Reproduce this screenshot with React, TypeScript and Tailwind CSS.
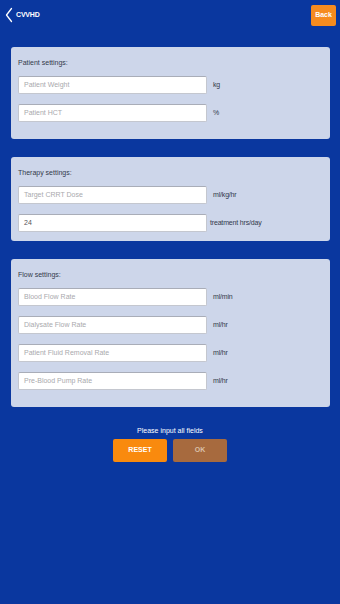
import React from "react";

type Field = { placeholder: string; unit: string; value?: string };

const SECTIONS: { title: string; fields: Field[]; pb: string }[] = [
  {
    title: "Patient settings:",
    pb: "pb-[17px]",
    fields: [
      { placeholder: "Patient Weight", unit: "kg" },
      { placeholder: "Patient HCT", unit: "%" },
    ],
  },
  {
    title: "Therapy settings:",
    pb: "pb-[9px]",
    fields: [
      { placeholder: "Target CRRT Dose", unit: "ml/kg/hr" },
      { placeholder: "", unit: "treatment hrs/day", value: "24" },
    ],
  },
  {
    title: "Flow settings:",
    pb: "pb-[17px]",
    fields: [
      { placeholder: "Blood Flow Rate", unit: "ml/min" },
      { placeholder: "Dialysate Flow Rate", unit: "ml/hr" },
      { placeholder: "Patient Fluid Removal Rate", unit: "ml/hr" },
      { placeholder: "Pre-Blood Pump Rate", unit: "ml/hr" },
    ],
  },
];

export default function App() {
  return (
    <div className="w-[340px] h-[604px] bg-[#0a379f] font-['Liberation_Sans',Arial,sans-serif] overflow-hidden">
      {/* header */}
      <div className="flex items-center justify-between h-[30px] pl-[5px] pr-[4px]">
        <div className="flex items-center gap-[3px] text-white">
          <svg width="8" height="16" viewBox="0 0 8 16" fill="none">
            <path d="M6.5 1.5 L1.5 8 L6.5 14.5" stroke="white" strokeWidth="1.3" strokeLinecap="round" strokeLinejoin="round" />
          </svg>
          <span className="text-[7px] font-bold tracking-tight">CVVHD</span>
        </div>
        <button className="w-[25px] h-[21px] bg-[#f68b1f] rounded-[2px] text-white text-[7px] font-bold">
          Back
        </button>
      </div>

      <div className="flex flex-col gap-[18px] px-[11px] pr-[10px] mt-[17px]">
        {SECTIONS.map(section => (
          <div key={section.title} className={`bg-[#cdd6ea] rounded-[3px] px-[7px] pt-[11px] ${section.pb}`}>
            <div className="text-[7px] text-[#333a4a] leading-[9px] h-[18px]">{section.title}</div>
            <div className="flex flex-col gap-[10px]">
              {section.fields.map(field => (
                <div key={field.unit + field.placeholder} className="flex items-center">
                  <div className="w-[189px] h-[18px] bg-white border border-[#c4c7cf] border-t-[#a9adb8] rounded-[2px] flex items-center px-[5px] text-[7px]">
                    {field.value ? (
                      <span className="text-[#555]">{field.value}</span>
                    ) : (
                      <span className="text-[#a9a9ad]">{field.placeholder}</span>
                    )}
                  </div>
                  <span className={`${field.value ? "ml-[3px]" : "ml-[6px]"} text-[7px] text-[#333a4a] tracking-tight`}>{field.unit}</span>
                </div>
              ))}
            </div>
          </div>
        ))}
      </div>

      <div className="flex flex-col items-center mt-[19px]">
        <div className="text-[7px] text-white leading-[9px]">Please input all fields</div>
        <div className="flex gap-[6px] mt-[4px]">
          <button className="w-[54px] h-[23px] bg-[#f98a0e] rounded-[2px] text-white text-[7px] font-bold">RESET</button>
          <button className="w-[54px] h-[23px] bg-[#a76a3e] rounded-[2px] text-[#d9c0a8] text-[7px] font-bold">OK</button>
        </div>
      </div>
    </div>
  );
}
